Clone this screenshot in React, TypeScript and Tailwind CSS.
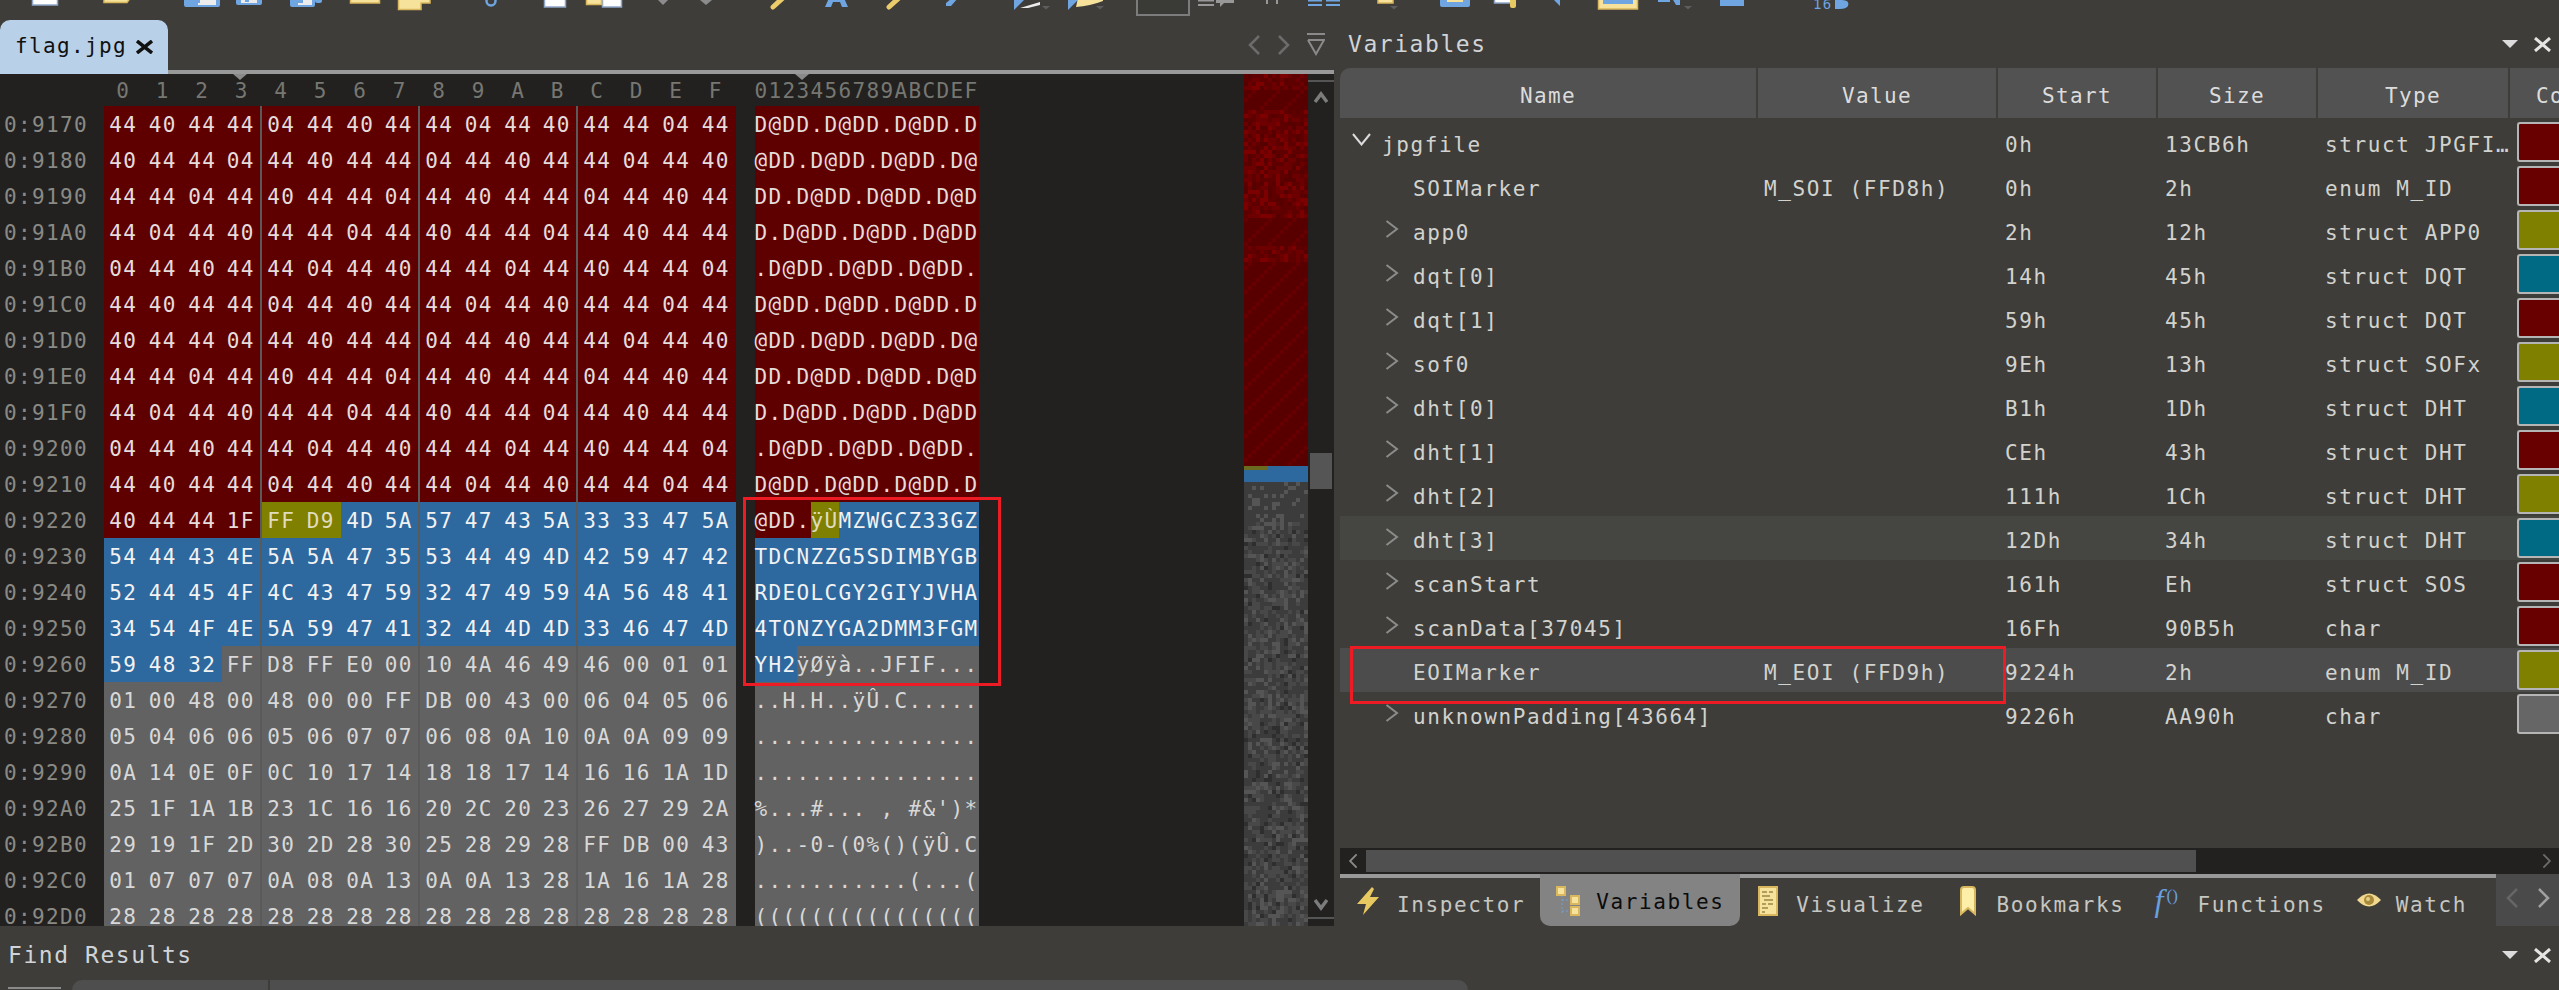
const STREAM = ["44", "40", "44", "44", "04"];

const tailRows = [
  "40 44 44 1F FF D9 4D 5A 57 47 43 5A 33 33 47 5A",
  "54 44 43 4E 5A 5A 47 35 53 44 49 4D 42 59 47 42",
  "52 44 45 4F 4C 43 47 59 32 47 49 59 4A 56 48 41",
  "34 54 4F 4E 5A 59 47 41 32 44 4D 4D 33 46 47 4D",
  "59 48 32 FF D8 FF E0 00 10 4A 46 49 46 00 01 01",
  "01 00 48 00 48 00 00 FF DB 00 43 00 06 04 05 06",
  "05 04 06 06 05 06 07 07 06 08 0A 10 0A 0A 09 09",
  "0A 14 0E 0F 0C 10 17 14 18 18 17 14 16 16 1A 1D",
  "25 1F 1A 1B 23 1C 16 16 20 2C 20 23 26 27 29 2A",
  "29 19 1F 2D 30 2D 28 30 25 28 29 28 FF DB 00 43",
  "01 07 07 07 0A 08 0A 13 0A 0A 13 28 1A 16 1A 28",
  "28 28 28 28 28 28 28 28 28 28 28 28 28 28 28 28",
].map((r) => r.split(" "));

const headRows = Array.from({ length: 11 }, (_, r) =>
  Array.from({ length: 16 }, (_, c) => STREAM[(r * 16 + c) % 5])
);
const rows = [...headRows, ...tailRows];

type Region = "red" | "olive" | "blue" | "gray";

const regionOf = (i: number): Region => {
  if (i < 180) return "red";
  if (i < 182) return "olive";
  if (i < 243) return "blue";
  return "gray";
};

const regionClass: Record<Region, string> = {
  red: "bg-[#5f0000] text-[#e6dcdc]",
  olive: "bg-[#808000] text-[#e0dcc0]",
  blue: "bg-[#2d689f] text-[#f2f2f2]",
  gray: "bg-[#626262] text-[#d8d8d8]",
};

const toChar = (hex: string) => {
  const v = parseInt(hex, 16);
  if ((v >= 0x20 && v < 0x7f) || v >= 0xa0) return String.fromCharCode(v);
  return ".";
};

const asciiRuns = (bytes: string[], r: number) => {
  const runs: { region: Region; text: string }[] = [];
  bytes.forEach((b, c) => {
    const region = regionOf(r * 16 + c);
    const last = runs[runs.length - 1];
    if (last && last.region === region) last.text += toChar(b);
    else runs.push({ region, text: toChar(b) });
  });
  return runs;
};

const HEX_HEAD = "0123456789ABCDEF".split("");

// minimap cells, one per byte row chunk, seeded so the picture is stable
const minimapCells = () => {
  let seed = 1337;
  const rnd = () => {
    seed = (seed * 16807) % 2147483647;
    return seed / 2147483647;
  };
  const cells: { x: number; y: number; fill: string }[] = [];
  for (let y = 0; y < 213; y++) {
    for (let x = 0; x < 16; x++) {
      const px = y * 4;
      let fill = "#3a3a3a";
      if (y < 98) {
        const noisy = y < 4 || (y >= 9 && y < 36) || (y >= 43 && y < 47);
        if (noisy) {
          const n = rnd();
          fill = n < 0.35 ? "#5f0000" : n < 0.65 ? "#6c0000" : n < 0.85 ? "#7c0000" : "#560000";
        } else {
          fill = (x + y) % 6 === 0 ? "#660000" : "#580000";
        }
      } else if (y < 102) {
        fill = y === 98 && x < 6 ? "#6a6a20" : "#2d689f";
      } else if (y < 112) {
        const n = rnd();
        fill = n < 0.8 ? "#3c3c3c" : "#555555";
      } else {
        const n = rnd();
        fill = n < 0.45 ? "#3c3c3c" : n < 0.75 ? "#484848" : n < 0.92 ? "#555555" : "#2e2e2e";
      }
      cells.push({ x: x * 4, y: px, fill });
    }
  }
  return cells;
};

const Minimap = () => (
  <svg width="64" height="852" className="block shrink-0">
    {minimapCells().map((c, i) => (
      <rect key={i} x={c.x} y={c.y} width="4" height="4" fill={c.fill} />
    ))}
  </svg>
);

// the toolbar is cut off by the top of the shot, only the icon bottoms show
const ToolbarSlivers = () => (
  <svg width="2559" height="20" className="block">
    <g fill="#ffffff" stroke="#8ea6c8" strokeWidth="1.5">
      <rect x="32.5" y="-4" width="25" height="9" />
      <rect x="544.5" y="-4" width="21" height="11" />
      <rect x="602.5" y="-4" width="19" height="11" />
      <rect x="1494.5" y="-4" width="18" height="7" />
    </g>
    <g fill="#f6e29a" stroke="#d9b75e" strokeWidth="1.5">
      <path d="M104 -3H131L127 2.5H104Z" />
      <rect x="350.5" y="-4" width="29" height="7" />
      <path d="M398.5 -3V9.5H421V3H430V-3Z" />
      <rect x="586.5" y="-3" width="15" height="7.5" />
      <rect x="1598.5" y="-4" width="39" height="13" />
      <rect x="1378" y="-4" width="15" height="7" />
    </g>
    <g fill="#6fa5e0">
      <rect x="184" y="-3" width="36" height="10" rx="2" />
      <rect x="236" y="-3" width="26" height="8" rx="2" />
      <rect x="290" y="-3" width="25" height="10" rx="2" />
      <rect x="315" y="-3" width="7" height="6" rx="2" />
      <rect x="1440" y="-3" width="30" height="10" rx="2" />
      <rect x="1308" y="0" width="14" height="1.5" />
      <rect x="1326" y="0" width="14" height="1.5" />
      <rect x="1308" y="4" width="14" height="2" />
      <rect x="1326" y="4" width="14" height="2" />
      <rect x="1603" y="0" width="30" height="4" />
      <path d="M825 7L829 -2H844L848 7H842L840 2H833L831 7Z" />
      <path d="M946 3L952 -2H958L951 6L946 6Z" />
      <path d="M1014 0H1024L1014 10Z" />
      <path d="M1068 0H1078L1068 10Z" />
      <path d="M1552 0H1554L1560 6V0Z" />
      <rect x="1658" y="0" width="12" height="2" />
      <path d="M1672 -2H1680V5H1676Z" />
      <rect x="1720" y="-2" width="24" height="8" />
      <path d="M1835 0H1842Q1850 0 1848 6Q1846 9 1840 9H1835Z" />
    </g>
    <g fill="#ececec">
      <rect x="198" y="-2" width="18" height="7" />
      <rect x="241" y="-2" width="16" height="5" />
      <rect x="298" y="-2" width="14" height="7" />
      <path d="M1020 8L1040 2V5L1028 8Z" />
    </g>
    <g fill="#6fa5e0">
      <rect x="194" y="-1" width="6" height="4" />
      <rect x="245" y="-1" width="4" height="3" />
      <rect x="298" y="-1" width="5" height="4" />
    </g>
    <circle cx="491" cy="1" r="4.5" fill="none" stroke="#6fa5e0" strokeWidth="2.5" />
    <g fill="#8c8c8c">
      <path d="M658 0H668L663 5Z" />
      <path d="M700 0H712L706 5Z" />
    </g>
    <g stroke="#eccb6a" strokeWidth="5" strokeLinecap="round">
      <line x1="773" y1="7" x2="784" y2="-3" />
      <line x1="889" y1="7" x2="900" y2="-3" />
    </g>
    <path d="M1076 7Q1090 6 1103 1V-2H1078Z" fill="#f6e29a" />
    <g fill="#5e5e5e">
      <path d="M1042 6H1050L1046 9.5Z" />
      <path d="M1096 6H1104L1100 9.5Z" />
      <path d="M1390 6H1398L1394 9.5Z" />
      <path d="M1684 6H1692L1688 9.5Z" />
    </g>
    <rect x="1137" y="-3" width="52" height="18" fill="#3a3a36" stroke="#7c7c7c" strokeWidth="2" />
    <g fill="#989898">
      <rect x="1198" y="0" width="16" height="1.5" />
      <rect x="1198" y="4" width="16" height="2" />
      <path d="M1216 -2H1234V3H1224L1220 7V3H1216Z" />
      <rect x="1266" y="0" width="2" height="4" />
      <rect x="1276" y="0" width="2" height="4" />
    </g>
    <rect x="1510" y="-2" width="6" height="10" rx="2" fill="#e8c860" />
    <rect x="1447" y="0" width="16" height="2" fill="#f6e29a" />
    <text x="1813" y="9" fontSize="14" fill="#6fa5e0" fontFamily="'DejaVu Sans Mono', monospace">16</text>
  </svg>
);

const NavChevron = ({ dir, color, size = "w-[14px] h-[22px]" }: { dir: "left" | "right"; color: string; size?: string }) => (
  <svg viewBox="0 0 14 22" className={size}>
    <polyline
      points={dir === "left" ? "12,2 3,11 12,20" : "2,2 11,11 2,20"}
      fill="none"
      stroke={color}
      strokeWidth="2.5"
    />
  </svg>
);

const ChevronRight = () => (
  <svg width="14" height="18" viewBox="0 0 14 18" className="-mt-[10px]">
    <polyline points="1.5,1 12,9 1.5,17" fill="none" stroke="#8c8c8c" strokeWidth="2" />
  </svg>
);

const ChevronDown = () => (
  <svg width="19" height="13" viewBox="0 0 19 13" className="-mt-[13px]">
    <polyline points="1,1 9.5,11.5 18,1" fill="none" stroke="#dcdcdc" strokeWidth="2" />
  </svg>
);

const PanelControls = () => (
  <div className="flex items-center gap-[16px] pr-[8px]">
    <svg width="16" height="8" viewBox="0 0 16 8">
      <path d="M0 0H16L8 8Z" fill="#dcdcdc" />
    </svg>
    <svg width="17" height="15" viewBox="0 0 17 15">
      <path d="M1 1L16 14M16 1L1 14" stroke="#e4e4e4" strokeWidth="3" fill="none" />
    </svg>
  </div>
);

const ScrollArrow = ({ up }: { up: boolean }) => (
  <svg width="14" height="13" viewBox="0 0 14 13">
    <polyline points={up ? "1,11 7,3 13,11" : "1,2 7,10 13,2"} fill="none" stroke="#7c7c7c" strokeWidth="3.5" />
  </svg>
);

type Var = {
  name: string;
  value?: string;
  start: string;
  size: string;
  type: string;
  swatch: string;
  expand?: "open" | "closed";
  hl?: string;
};

const RED = "bg-[#680000]";
const OLIVE = "bg-[#808000]";
const TEAL = "bg-[#006a85]";
const GRAY = "bg-[#666666]";

const vars: Var[] = [
  { name: "jpgfile", start: "0h", size: "13CB6h", type: "struct JPGFI…", swatch: RED, expand: "open" },
  { name: "SOIMarker", value: "M_SOI (FFD8h)", start: "0h", size: "2h", type: "enum M_ID", swatch: RED },
  { name: "app0", start: "2h", size: "12h", type: "struct APP0", swatch: OLIVE, expand: "closed" },
  { name: "dqt[0]", start: "14h", size: "45h", type: "struct DQT", swatch: TEAL, expand: "closed" },
  { name: "dqt[1]", start: "59h", size: "45h", type: "struct DQT", swatch: RED, expand: "closed" },
  { name: "sof0", start: "9Eh", size: "13h", type: "struct SOFx", swatch: OLIVE, expand: "closed" },
  { name: "dht[0]", start: "B1h", size: "1Dh", type: "struct DHT", swatch: TEAL, expand: "closed" },
  { name: "dht[1]", start: "CEh", size: "43h", type: "struct DHT", swatch: RED, expand: "closed" },
  { name: "dht[2]", start: "111h", size: "1Ch", type: "struct DHT", swatch: OLIVE, expand: "closed" },
  { name: "dht[3]", start: "12Dh", size: "34h", type: "struct DHT", swatch: TEAL, expand: "closed", hl: "bg-[#454541]" },
  { name: "scanStart", start: "161h", size: "Eh", type: "struct SOS", swatch: RED, expand: "closed" },
  { name: "scanData[37045]", start: "16Fh", size: "90B5h", type: "char", swatch: RED, expand: "closed" },
  { name: "EOIMarker", value: "M_EOI (FFD9h)", start: "9224h", size: "2h", type: "enum M_ID", swatch: OLIVE, hl: "bg-[#4c4c4c]" },
  { name: "unknownPadding[43664]", start: "9226h", size: "AA90h", type: "char", swatch: GRAY, expand: "closed" },
];

const VarRow = ({ v }: { v: Var }) => (
  <div className={`flex items-center h-[44px] text-[#d2d2ce] tracking-[1.6px] ${v.hl ?? ""}`}>
    <div className={`flex items-center w-[418px] pt-[7px] whitespace-pre ${v.expand === "open" ? "pl-[12px]" : "pl-[45px]"}`}>
      <span className={`flex shrink-0 ${v.expand === "open" ? "w-[30px]" : "w-[28px]"}`}>
        {v.expand === "open" && <ChevronDown />}
        {v.expand === "closed" && <ChevronRight />}
      </span>
      {v.name}
    </div>
    <div className="w-[240px] pl-[6px] pt-[7px] whitespace-pre">{v.value}</div>
    <div className="w-[160px] pl-[7px] pt-[7px]">{v.start}</div>
    <div className="w-[160px] pl-[7px] pt-[7px]">{v.size}</div>
    <div className="w-[199px] pl-[7px] pt-[7px] whitespace-pre">{v.type}</div>
    <div className={`flex-1 h-[40px] rounded-l-[3px] border-2 border-r-0 border-[#b5b5b5] ${v.swatch}`} />
  </div>
);

const HeadCell = ({ label, w }: { label: string; w: string }) => (
  <div className={`flex items-center justify-center h-full pt-[7px] bg-[#525252] border-r-2 border-[#3e3d39] text-[#dcdcdc] ${w}`}>
    {label}
  </div>
);

const App = () => {
  return (
    <div className="relative w-[2559px] h-[990px] overflow-hidden bg-[#3e3d39] flex flex-col [font-family:'DejaVu_Sans_Mono',monospace] text-[21px] tracking-[1.36px]">
      <div className="h-[20px] shrink-0">
        <ToolbarSlivers />
      </div>

      <div className="flex h-[906px] shrink-0">
        {/* hex editor */}
        <div className="flex flex-col w-[1334px] shrink-0">
          <div className="flex h-[54px] shrink-0">
            <div className="flex items-center w-[168px] pl-[15px] gap-[9px] rounded-t-[10px] bg-[#b8d0e8] text-[#111111]">
              flag.jpg
              <svg width="17" height="14" viewBox="0 0 17 14">
                <path d="M1 1L16 13M16 1L1 13" stroke="#111111" strokeWidth="3.5" fill="none" />
              </svg>
            </div>
            <div className="flex flex-1 items-center justify-end gap-[16px] pr-[9px] border-b-4 border-[#999999]">
              <NavChevron dir="left" color="#6c6c6c" />
              <NavChevron dir="right" color="#6c6c6c" />
              <svg width="18" height="24" viewBox="0 0 18 24">
                <path d="M0 1H18" stroke="#8a8a8a" strokeWidth="2" />
                <polyline points="1,7 9,21 17,7 1,7" fill="none" stroke="#8a8a8a" strokeWidth="2" />
              </svg>
            </div>
          </div>

          <div className="flex h-[852px] shrink-0 overflow-hidden bg-[#222120] leading-[39px]">
            <div className="w-[1244px] shrink-0">
              <div className="flex h-[32px] text-[#777772] leading-[34px]">
                <div className="w-[103.5px] shrink-0" />
                {HEX_HEAD.map((h) => (
                  <div key={h} className="w-[39.5px] shrink-0 text-center">
                    {h}
                  </div>
                ))}
                <div className="ml-[19px]">{HEX_HEAD.join("")}</div>
              </div>
              {rows.map((bytes, r) => (
                <div key={r} className="flex h-[36px]">
                  <div className="w-[103.5px] shrink-0 pl-[4px] text-[#8a8a85]">
                    0:{(0x9170 + r * 16).toString(16).toUpperCase()}
                  </div>
                  {bytes.map((b, c) => (
                    <div
                      key={c}
                      className={`w-[39.5px] shrink-0 text-center ${regionClass[regionOf(r * 16 + c)]} ${
                        c === 3 || c === 7 || c === 11 ? "border-r-2 border-[#5a5a5a]" : ""
                      }`}
                    >
                      {b}
                    </div>
                  ))}
                  <div className="flex ml-[19px] whitespace-pre">
                    {asciiRuns(bytes, r).map((run, i) => (
                      <span key={i} className={regionClass[run.region]}>
                        {run.text}
                      </span>
                    ))}
                  </div>
                </div>
              ))}
            </div>
            <Minimap />
            <div className="relative flex flex-col items-center justify-between flex-1 pt-[6px] pb-[7px]">
              <div className="flex flex-col items-center gap-[9px] w-full">
                <div className="w-full h-[2px] bg-[#555555]" />
                <ScrollArrow up />
              </div>
              <div className="absolute left-[2px] right-[2px] top-[379px] h-[36px] bg-[#555555]" />
              <div className="flex flex-col items-center gap-[6px] w-full">
                <ScrollArrow up={false} />
                <div className="w-full h-[2px] bg-[#555555]" />
              </div>
            </div>
          </div>
        </div>

        {/* variables panel */}
        <div className="flex flex-col w-[1219px] shrink-0 ml-[6px]">
          <div className="flex items-center justify-between h-[48px] shrink-0 pl-[8px] text-[23px] tracking-[1.55px] text-[#d0d4d8]">
            Variables
            <PanelControls />
          </div>

          <div className="flex h-[50px] shrink-0 rounded-tl-[10px] overflow-hidden">
            <HeadCell label="Name" w="w-[418px]" />
            <HeadCell label="Value" w="w-[240px]" />
            <HeadCell label="Start" w="w-[160px]" />
            <HeadCell label="Size" w="w-[160px]" />
            <HeadCell label="Type" w="w-[192px]" />
            <div className="flex items-center flex-1 pl-[26px] pt-[7px] bg-[#525252] text-[#dcdcdc] overflow-hidden whitespace-pre">
              Color
            </div>
          </div>

          <div className="flex-1 pt-[2px]">
            {vars.map((v) => (
              <VarRow key={v.name} v={v} />
            ))}
          </div>

          <div className="flex items-center h-[26px] shrink-0 bg-[#222120]">
            <div className="flex justify-center w-[26px]">
              <NavChevron dir="left" color="#8a8a8a" size="w-[12px] h-[16px]" />
            </div>
            <div className="w-[830px] h-[22px] bg-[#505050]" />
            <div className="flex flex-1 justify-end pr-[6px]">
              <NavChevron dir="right" color="#6a6a6a" size="w-[12px] h-[16px]" />
            </div>
          </div>

          <div className="flex h-[52px] shrink-0">
            <div className="flex flex-1 border-t-4 border-[#999999] text-[#c6c6c2] tracking-[1.6px]">
              <div className="flex items-center h-full pt-[7px] pl-[16px] pr-[15px] gap-[17px]">
                <svg width="24" height="28" viewBox="0 0 24 28" className="-mt-[9px]">
                  <path d="M16 0L1 17H10L7 28L23 10H14L18 2Z" fill="#e8c860" />
                </svg>
                Inspector
              </div>
              <div className="flex items-center w-[200px] h-[52px] -mt-[4px] pt-[6px] pl-[16px] gap-[16px] rounded-b-[10px] bg-[#838383] text-[#0c0c0c]">
                <svg width="24" height="30" viewBox="0 0 24 30" className="shrink-0 -mt-[4px]">
                  <path d="M6 9V29" stroke="#6f9fd8" strokeWidth="1" strokeDasharray="2 2" />
                  <path d="M6 14H14M6 25H14" stroke="#6f9fd8" strokeWidth="1" strokeDasharray="2 2" />
                  <g fill="#f6e29a" stroke="#d9b75e" strokeWidth="2">
                    <rect x="1" y="1" width="8" height="8" />
                    <rect x="15" y="10" width="8" height="8" />
                    <rect x="15" y="21" width="8" height="8" />
                  </g>
                </svg>
                Variables
              </div>
              <div className="flex items-center h-full pt-[7px] pl-[18px] pr-[36px] gap-[18px]">
                <svg width="20" height="30" viewBox="0 0 20 30" className="-mt-[9px]">
                  <rect x="1" y="1" width="18" height="28" fill="#f6e29a" stroke="#d9b75e" strokeWidth="2" />
                  <path d="M4 6H9M11 6H15M4 10H12M6 14H15M4 18H8M10 18H15M4 22H10M4 26H7" stroke="#9a8748" strokeWidth="1.5" />
                </svg>
                Visualize
              </div>
              <div className="flex items-center h-full pt-[7px] pr-[30px] gap-[20px]">
                <svg width="16" height="30" viewBox="0 0 16 30" className="-mt-[9px]">
                  <path d="M1 4Q1 1 4 1H12Q15 1 15 4V28L8 22L1 28Z" fill="#fdeea8" stroke="#d9b75e" strokeWidth="2" />
                </svg>
                Bookmarks
              </div>
              <div className="flex items-center h-full pt-[7px] pr-[31px] gap-[14px]">
                <span className="flex items-start w-[29px] -mt-[12px] text-[#6aa0e0] [font-family:'Liberation_Serif',serif] italic tracking-normal text-[32px] leading-none">
                  f<span className="text-[17px] not-italic mt-[3px] ml-[3px]">()</span>
                </span>
                Functions
              </div>
              <div className="flex items-center h-full pt-[7px] gap-[15px]">
                <svg width="24" height="14" viewBox="0 0 24 14" className="-mt-[11px]">
                  <path d="M0 7Q12 -6 24 7Q12 20 0 7Z" fill="#f0d890" />
                  <circle cx="12" cy="7" r="5" fill="#a88a3a" />
                  <circle cx="11" cy="6" r="2" fill="#e4cf88" />
                </svg>
                Watch
              </div>
            </div>
            <div className="flex items-center justify-center gap-[18px] w-[63px] shrink-0 pb-[4px] bg-[#4a4a4a]">
              <NavChevron dir="left" color="#666666" />
              <NavChevron dir="right" color="#a0a0a0" />
            </div>
          </div>
        </div>
      </div>

      {/* find results */}
      <div className="flex flex-col flex-1 min-h-0">
        <div className="flex items-center justify-between h-[54px] shrink-0 pl-[8px] pt-[4px] text-[23px] tracking-[1.55px] text-[#d0d4d8]">
          Find Results
          <PanelControls />
        </div>
        <div className="flex flex-1 min-h-0">
          <div className="w-[53px] ml-[8px] mt-[7px] border-t-2 border-[#8a8a8a]" />
          <div className="flex ml-[11px] w-[1396px] rounded-t-[10px] bg-[#4e4e4e]">
            <div className="w-[198px] border-r-2 border-[#3e3d39]" />
          </div>
        </div>
      </div>

      {/* carets on the hex ruler */}
      <svg width="14" height="6" viewBox="0 0 14 6" className="absolute left-[233px] top-[74px]">
        <path d="M0 0H14L7 6Z" fill="#8a8a8a" />
      </svg>
      <svg width="14" height="6" viewBox="0 0 14 6" className="absolute left-[795px] top-[74px]">
        <path d="M0 0H14L7 6Z" fill="#8a8a8a" />
      </svg>

      {/* red annotation boxes */}
      <div className="absolute left-[743px] top-[497px] w-[258px] h-[189px] border-[3px] border-[#ed1c24]" />
      <div className="absolute left-[1350px] top-[646px] w-[656px] h-[58px] border-[3px] border-[#ed1c24]" />
    </div>
  );
};

export default App;
